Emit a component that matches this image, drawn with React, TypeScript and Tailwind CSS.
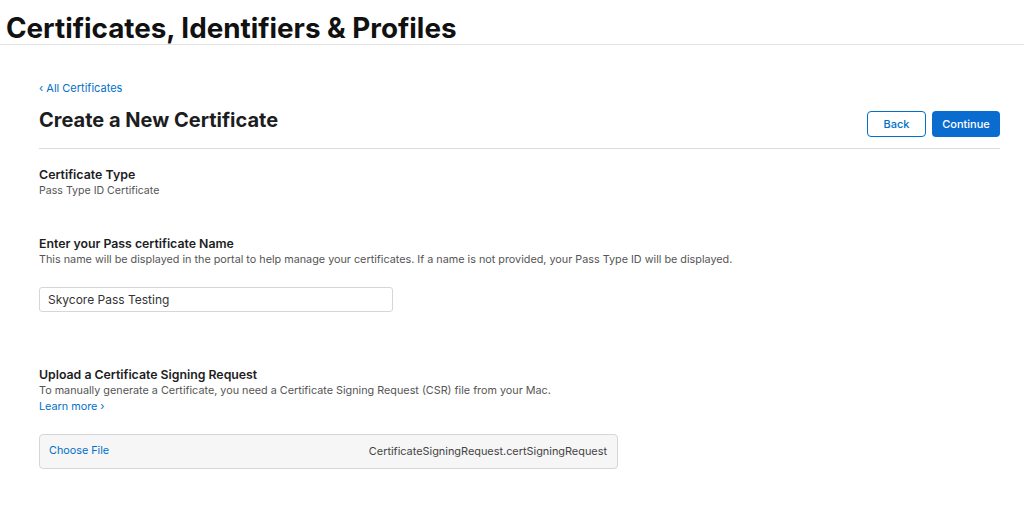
import React from 'react';

const font = { fontFamily: 'Inter, "Noto Sans", sans-serif' };

const App: React.FC = () => {
  return (
    <div className="w-full h-[518px] bg-white text-[#1d1d1f] overflow-hidden" style={font}>
      <header className="h-[45px] pl-[6px] pt-[14px] border-b border-[#e3e3e3]">
        <h1 className="text-[27.8px] leading-[29px] font-bold text-[#111]">
          Certificates, Identifiers &amp; Profiles
        </h1>
      </header>

      <main className="pl-[39px] pr-[24px]">
        <a href="#" className="block mt-[35px] text-[11px] leading-[16px] text-[#0070c9]">
          ‹ All Certificates
        </a>

        <div className="flex justify-between items-start pb-[11px] border-b border-[#dcdcdc]">
          <h2 className="mt-[10px] text-[20px] leading-[28px] font-bold">Create a New Certificate</h2>
          <div className="mt-[15px] flex gap-[6px]">
            <button className="w-[59px] h-[26px] rounded-[4px] border border-[#0070c9] text-[11px] font-medium text-[#0070c9] bg-white">
              Back
            </button>
            <button className="w-[68px] h-[26px] rounded-[4px] bg-[#0a6ccf] text-[11px] font-medium text-white">
              Continue
            </button>
          </div>
        </div>

        <section className="mt-[18px]">
          <h3 className="text-[12.4px] leading-[16px] font-semibold">Certificate Type</h3>
          <p className="text-[10.6px] leading-[15px] text-[#555]">Pass Type ID Certificate</p>
        </section>

        <section className="mt-[38px]">
          <h3 className="text-[12.3px] leading-[16px] font-semibold">Enter your Pass certificate Name</h3>
          <p className="text-[10.8px] leading-[15px] text-[#555]">
            This name will be displayed in the portal to help manage your certificates. If a name is not provided, your Pass Type ID will be displayed.
          </p>
          <input
            className="mt-[20px] block w-[354px] h-[25px] px-[8px] rounded-[3px] border border-[#d6d6d6] text-[12px] text-[#333] outline-none"
            defaultValue="Skycore Pass Testing"
          />
        </section>

        <section className="mt-[55px]">
          <h3 className="text-[12.3px] leading-[16px] font-semibold">Upload a Certificate Signing Request</h3>
          <p className="text-[10.8px] leading-[16px] text-[#555]">
            To manually generate a Certificate, you need a Certificate Signing Request (CSR) file from your Mac.
          </p>
          <a href="#" className="block text-[10.8px] leading-[15px] text-[#0070c9]">Learn more ›</a>
          <div className="mt-[20px] w-[579px] h-[35px] flex items-center justify-between pl-[9px] pr-[10px] rounded-[4px] border border-[#d6d6d6] bg-[#f6f6f6]">
            <span className="text-[10.8px] text-[#0070c9]">Choose File</span>
            <span className="text-[10.9px] text-[#444]">CertificateSigningRequest.certSigningRequest</span>
          </div>
        </section>
      </main>
    </div>
  );
};

export default App;
